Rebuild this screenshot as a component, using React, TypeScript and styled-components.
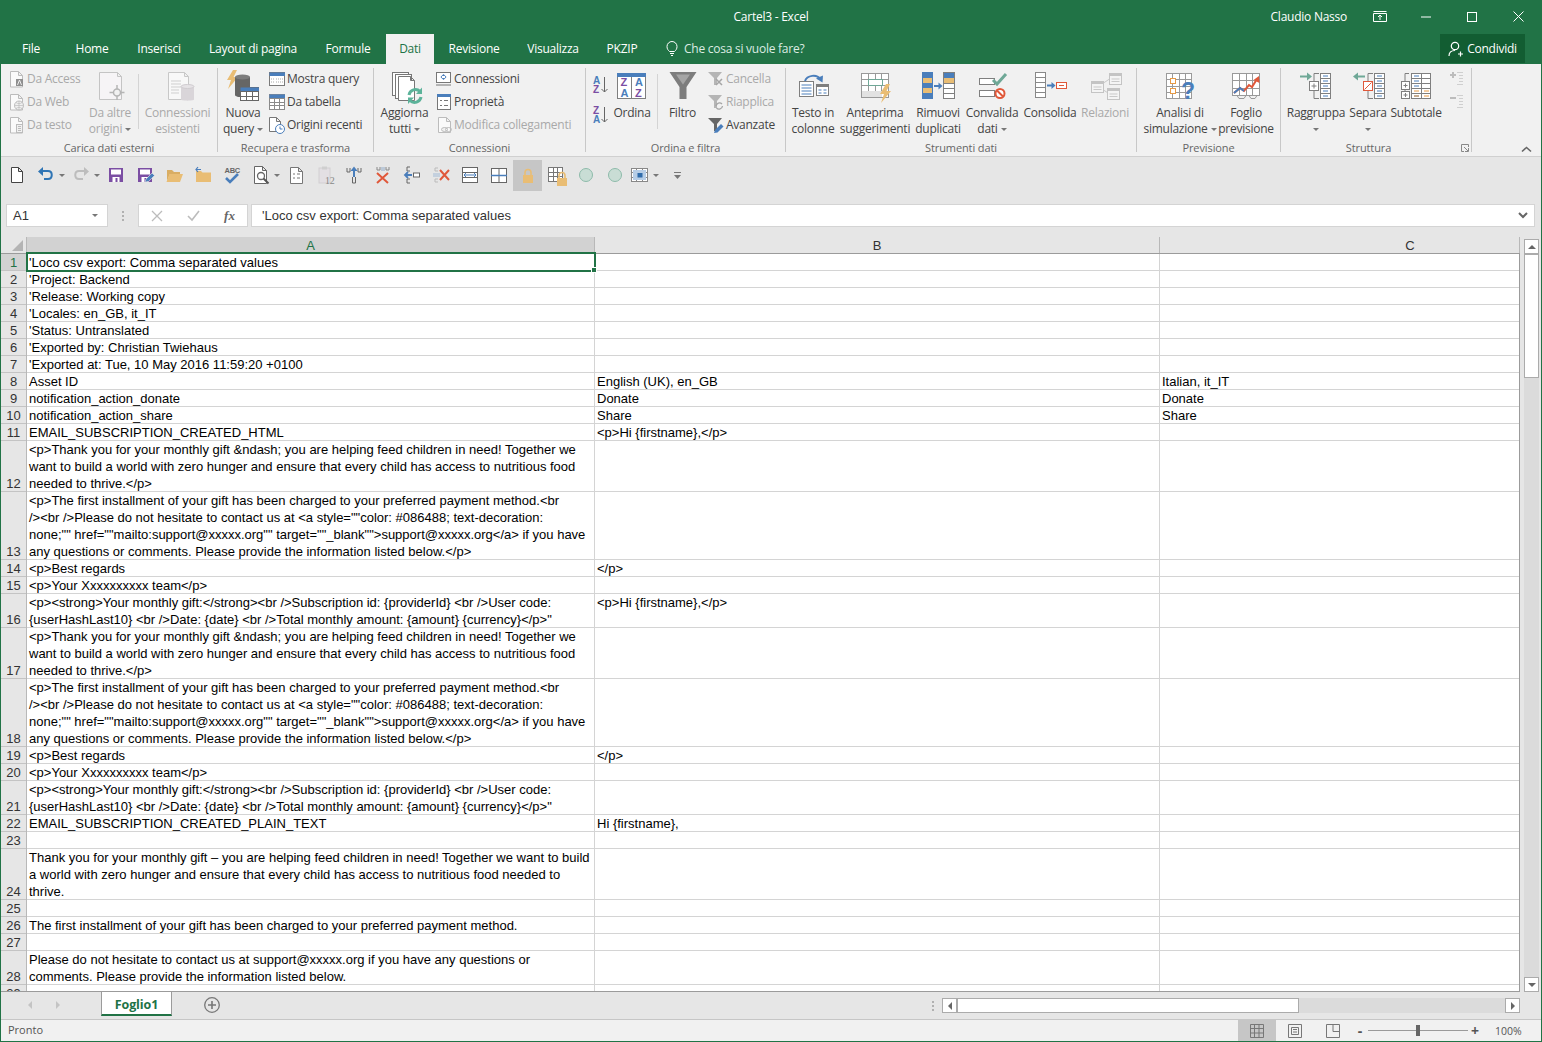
import React from "react";
import styled, { createGlobalStyle } from "styled-components";

const GlobalStyle = createGlobalStyle`
  html, body { margin: 0; padding: 0; background: #e6e6e6; }
  body { font-family: "Open Sans", "Liberation Sans", sans-serif; }
  #root { width: 1542px; height: 1042px; overflow: hidden; }
`;

const GREEN = "#217346";
const GR = "#7f7f7f";
const LT = "#bcbcbc";
const BL = "#4a7ebb";
const OR = "#e9bd74";
const RD = "#e0583a";
const TL = "#6fa897";
const PU = "#7b4ea3";

/* ---------- window ---------- */
const Win = styled.div`
  box-sizing: border-box;
  width: 1542px;
  height: 1042px;
  border: 1px solid ${GREEN};
  border-top: 0;
  display: flex;
  flex-direction: column;
  background: #e6e6e6;
  font-size: 12px;
  letter-spacing: -0.25px;
  color: #444;
`;
const TitleBar = styled.div`
  height: 34px;
  box-sizing: border-box;
  padding-bottom: 1px;
  background: ${GREEN};
  color: #fff;
  display: grid;
  grid-template-columns: 1fr auto 1fr;
  align-items: center;
`;
const TitleRight = styled.div`
  display: flex;
  justify-content: flex-end;
  align-items: center;
`;
const UserName = styled.span`
  margin-right: 10px;
`;
const WinBtn = styled.div`
  width: 46px;
  height: 32px;
  display: flex;
  align-items: center;
  justify-content: center;
`;
const TabBar = styled.div`
  height: 30px;
  background: ${GREEN};
  color: #fff;
  display: flex;
  padding-left: 7px;
`;
const Tab = styled.div<{ $w: number; $on?: boolean }>`
  width: ${(p) => p.$w}px;
  box-sizing: border-box;
  padding-bottom: 2px;
  margin-left: ${(p) => (p.$on ? 8 : 0)}px;
  display: flex;
  align-items: center;
  justify-content: center;
  background: ${(p) => (p.$on ? "#f1f1f1" : "transparent")};
  color: ${(p) => (p.$on ? GREEN : "#fff")};
`;
const TellMe = styled.div`
  margin-left: 14px;
  padding-bottom: 2px;
  display: flex;
  align-items: center;
  gap: 6px;
  color: #dcebe3;
`;
const Share = styled.div`
  margin-left: auto;
  margin-right: 16px;
  width: 85px;
  height: 29px;
  background: #125d32;
  display: flex;
  align-items: center;
  justify-content: center;
  gap: 3px;
`;

/* ---------- ribbon ---------- */
const Ribbon = styled.div`
  height: 92px;
  background: #f1f1f1;
  border-bottom: 1px solid #d0d0d0;
  display: flex;
`;
const Group = styled.div<{ $w: number }>`
  position: relative;
  width: ${(p) => p.$w}px;
  display: flex;
  flex-direction: column;
  background: linear-gradient(#c8c8c8, #c8c8c8) right 4px / 1px 84px no-repeat;
`;
const GroupBody = styled.div<{ $pl?: number }>`
  height: 76px;
  display: flex;
  padding-left: ${(p) => p.$pl ?? 0}px;
`;
const GroupLabel = styled.div<{ $pr?: number }>`
  height: 16px;
  line-height: 16px;
  text-align: center;
  color: #666;
  font-size: 11px;
  letter-spacing: -0.1px;
  padding-right: ${(p) => p.$pr ?? 1}px;
`;
const Launcher = styled.div`
  position: absolute;
  right: 3px;
  bottom: 4px;
`;
const Large = styled.div<{ $w: number; $off?: boolean }>`
  width: ${(p) => p.$w}px;
  flex-shrink: 0;
  padding-top: 7px;
  display: flex;
  flex-direction: column;
  align-items: center;
  color: ${(p) => (p.$off ? "#a9a9a9" : "#444")};
  white-space: nowrap;
`;
const LargeIcon = styled.div`
  height: 34px;
`;
const Line = styled.div`
  height: 16px;
  line-height: 16px;
  display: flex;
  align-items: center;
  gap: 3px;
`;
const Caret = styled.span`
  width: 0;
  height: 0;
  border-left: 3px solid transparent;
  border-right: 3px solid transparent;
  border-top: 3px solid #777;
`;
const SmallCol = styled.div<{ $w: number }>`
  width: ${(p) => p.$w}px;
  flex-shrink: 0;
  padding-top: 3px;
`;
const SmallRow = styled.div<{ $off?: boolean }>`
  height: 23px;
  display: flex;
  align-items: center;
  gap: 1px;
  white-space: nowrap;
  color: ${(p) => (p.$off ? "#a9a9a9" : "#444")};
`;
const SortCol = styled.div`
  width: 23px;
  padding: 12px 0 0 5px;
  box-sizing: border-box;
  display: flex;
  flex-direction: column;
  gap: 11px;
`;
const VSep = styled.div<{ $ml: number }>`
  width: 1px;
  height: 55px;
  margin: 10px 0 0 ${(p) => p.$ml}px;
  background: #d4d4d4;
  flex-shrink: 0;
`;
const Collapse = styled.div`
  flex: 1;
  display: flex;
  align-items: flex-end;
  justify-content: flex-end;
  padding: 0 9px 4px 0;
`;

/* ---------- quick access ---------- */
const Qat = styled.div`
  height: 40px;
  padding: 3px 0 0 1px;
  box-sizing: border-box;
  display: flex;
  align-items: flex-start;
`;
const QatBtn = styled.div<{ $w?: number; $on?: boolean; $pl?: number }>`
  width: ${(p) => p.$w ?? 29}px;
  height: 31px;
  padding-bottom: 1px;
  display: flex;
  align-items: center;
  gap: 3px;
  box-sizing: border-box;
  padding-left: ${(p) => p.$pl ?? 0}px;
  justify-content: ${(p) => (p.$pl !== undefined ? "flex-start" : "center")};
  background: ${(p) => (p.$on ? "#c6c6c6" : "transparent")};
`;

/* ---------- formula bar ---------- */
const FormulaRow = styled.div`
  margin-top: 7px;
  height: 23px;
  display: flex;
  align-items: stretch;
  padding-left: 5px;
  font-family: "Liberation Sans", Arial, sans-serif;
  font-size: 13px;
  letter-spacing: 0;
  color: #333;
`;
const FieldBox = styled.div<{ $w?: number }>`
  box-sizing: border-box;
  width: ${(p) => (p.$w ? `${p.$w}px` : "auto")};
  background: #fff;
  border: 1px solid #d4d4d4;
  display: flex;
  align-items: center;
`;
const NameBox = styled(FieldBox)`
  padding: 0 9px 0 6px;
  justify-content: space-between;
`;
const Dots = styled.div`
  width: 30px;
  display: flex;
  flex-direction: column;
  align-items: center;
  justify-content: center;
  gap: 2px;
  & i {
    width: 2px;
    height: 2px;
    background: #b0b0b0;
  }
`;
const FnBox = styled(FieldBox)`
  justify-content: space-around;
  margin-right: 3px;
  color: #666;
  font-family: "Liberation Serif", serif;
  font-style: italic;
  font-weight: bold;
  font-size: 13px;
`;
const Input = styled(FieldBox)`
  flex: 1;
  margin-right: 6px;
  padding: 0 6px 0 10px;
  justify-content: space-between;
`;

/* ---------- sheet ---------- */
const Sheet = styled.div`
  margin-top: 10px;
  height: 755px;
  display: flex;
`;
const GridWrap = styled.div`
  width: 1519px;
  height: 755px;
  box-sizing: border-box;
  overflow: hidden;
  border-bottom: 1px solid #9b9b9b;
  font-family: "Liberation Sans", Arial, sans-serif;
  font-size: 13px;
  letter-spacing: 0;
  color: #000;
`;
const cols = "26px 568px 565px 360px";
const HeadRow = styled.div`
  display: grid;
  grid-template-columns: ${cols};
  grid-template-rows: 16px;
  height: 17px;
  box-sizing: border-box;
  border-bottom: 1px solid #9b9b9b;
`;
const Corner = styled.div`
  border-right: 1px solid #b8b8b8;
  background: #e6e6e6;
  display: flex;
  align-items: flex-end;
  justify-content: flex-end;
  padding: 0 3px 2px 0;
`;
const ColHead = styled.div<{ $on?: boolean; $shift?: number }>`
  box-sizing: border-box;
  overflow: hidden;
  text-align: center;
  line-height: 18px;
  padding-left: ${(p) => p.$shift ?? 0}px;
  color: ${(p) => (p.$on ? GREEN : "#333")};
  background: ${(p) => (p.$on ? "#d2d2d2" : "#e6e6e6")};
  border-right: 1px solid #b8b8b8;
  border-bottom: ${(p) => (p.$on ? `1px solid ${GREEN}` : "0")};
`;
const Row = styled.div<{ $lines: number }>`
  display: grid;
  grid-template-columns: ${cols};
  grid-template-rows: ${(p) => p.$lines * 17}px;
`;
const RowHead = styled.div<{ $on?: boolean }>`
  box-sizing: border-box;
  display: flex;
  align-items: flex-end;
  justify-content: center;
  line-height: 17px;
  color: ${(p) => (p.$on ? GREEN : "#333")};
  background: ${(p) => (p.$on ? "#d2d2d2" : "#e6e6e6")};
  border-right: 1px solid ${(p) => (p.$on ? GREEN : "#b8b8b8")};
  box-shadow: inset 0 -1px 0 #c4c4c4;
`;
const Cell = styled.div<{ $edge?: boolean }>`
  position: relative;
  box-sizing: border-box;
  min-height: 0;
  background: #fff;
  padding: 0 2px;
  line-height: 17px;
  white-space: pre;
  display: flex;
  align-items: flex-end;
  border-right: 1px solid ${(p) => (p.$edge ? "#9b9b9b" : "#d4d4d4")};
  box-shadow: inset 0 -1px 0 #d4d4d4;
`;
const Selection = styled.div`
  position: absolute;
  z-index: 2;
  left: -1px;
  top: -2px;
  right: -2px;
  bottom: -1px;
  border: 2px solid ${GREEN};
  &::after {
    content: "";
    position: absolute;
    right: -3px;
    bottom: -3px;
    width: 4px;
    height: 4px;
    background: ${GREEN};
    border: 1px solid #fff;
  }
`;
const VScroll = styled.div`
  margin: 2px 0 0 4px;
  width: 15px;
  height: 753px;
  display: flex;
  flex-direction: column;
  background: #dbdbdb;
`;
const ScrollBtn = styled.div<{ $w?: number }>`
  box-sizing: border-box;
  width: ${(p) => p.$w ?? 15}px;
  height: 15px;
  flex-shrink: 0;
  background: #fff;
  border: 1px solid #ababab;
  display: flex;
  align-items: center;
  justify-content: center;
`;
const VThumb = styled.div`
  box-sizing: border-box;
  height: 124px;
  background: #fff;
  border: 1px solid #ababab;
`;
const Grow = styled.div`
  flex: 1;
`;

/* ---------- bottom ---------- */
const SheetBar = styled.div`
  height: 27px;
  display: flex;
  align-items: flex-start;
`;
const NavArrows = styled.div`
  width: 100px;
  height: 26px;
  padding-left: 24px;
  box-sizing: border-box;
  display: flex;
  align-items: center;
  gap: 18px;
`;
const SheetTab = styled.div`
  box-sizing: border-box;
  width: 71px;
  height: 24px;
  padding-top: 2px;
  background: #fff;
  color: ${GREEN};
  font-weight: 700;
  letter-spacing: -0.1px;
  font-size: 12.5px;
  display: flex;
  align-items: center;
  justify-content: center;
  border-left: 1px solid #9b9b9b;
  border-right: 1px solid #9b9b9b;
  border-bottom: 2px solid ${GREEN};
`;
const AddSheet = styled.div`
  margin: 5px 0 0 32px;
  height: 18px;
`;
const HScrollZone = styled.div`
  margin: 6px 0 0 auto;
  width: 596px;
  margin-right: 21px;
  display: flex;
  align-items: center;
`;
const HDots = styled(Dots)`
  width: 18px;
  margin-right: 0;
`;
const HTrack = styled.div`
  flex: 1;
  height: 15px;
  background: #dbdbdb;
  display: flex;
`;
const HThumb = styled.div`
  box-sizing: border-box;
  width: 342px;
  background: #fff;
  border: 1px solid #ababab;
`;
const Status = styled.div`
  height: 22px;
  box-sizing: border-box;
  background: #f1f1f1;
  border-top: 1px solid #c6c6c6;
  display: flex;
  align-items: center;
  padding: 0 0 0 7px;
  color: #555;
  font-size: 11px;
  letter-spacing: 0;
`;
const StatusText = styled.span`
  margin-top: -2px;
`;
const StatusRight = styled.div`
  margin-left: auto;
  display: flex;
  align-items: center;
  height: 21px;
`;
const ViewBtn = styled.div<{ $on?: boolean }>`
  width: 38px;
  height: 21px;
  display: flex;
  align-items: center;
  justify-content: center;
  background: ${(p) => (p.$on ? "#c6c6c6" : "transparent")};
`;
const ZoomSlider = styled.div`
  width: 100px;
  height: 1px;
  background: #9a9a9a;
  display: flex;
  justify-content: center;
  align-items: center;
  & i {
    width: 4px;
    height: 11px;
    background: #666;
  }
`;
const ZoomSign = styled.span<{ $w: number }>`
  width: ${(p) => p.$w}px;
  text-align: center;
  font-weight: 700;
  font-size: 14px;
  color: #555;
`;
const Percent = styled.span`
  width: 59px;
  padding-left: 13px;
  box-sizing: border-box;
  font-size: 10.5px;
`;

/* ---------- drawing helpers ---------- */
const Glyph = styled.svg`
  display: block;
  overflow: visible;
  flex-shrink: 0;
`;
type Kids = { children?: React.ReactNode };
const S = ({ children }: Kids) => (
  <Glyph width={18} height={18} viewBox="0 0 18 18" fill="none">
    {children}
  </Glyph>
);
const L = ({ children }: Kids) => (
  <Glyph width={36} height={32} viewBox="0 0 36 32" fill="none">
    {children}
  </Glyph>
);
const Q = ({ children }: Kids) => (
  <Glyph width={20} height={20} viewBox="0 0 20 20" fill="none">
    {children}
  </Glyph>
);
const Doc = ({ x, y, w, h, c = GR, f = "#fff" }: { x: number; y: number; w: number; h: number; c?: string; f?: string }) => (
  <path d={`M${x} ${y}h${w - 4}l4 4v${h - 4}h${-w}zM${x + w - 4} ${y}v4h4`} stroke={c} fill={f} />
);
const Tbl = ({ x, y, w, h, nx, ny, c = GR, head }: { x: number; y: number; w: number; h: number; nx: number; ny: number; c?: string; head?: string }) => {
  const parts: React.ReactNode[] = [];
  for (let i = 1; i < nx; i++) {
    const px = x + Math.round((w * i) / nx);
    parts.push(<path key={`x${i}`} d={`M${px} ${y}v${h}`} stroke={c} />);
  }
  for (let i = 1; i < ny; i++) {
    const py = y + Math.round((h * i) / ny);
    parts.push(<path key={`y${i}`} d={`M${x} ${py}h${w}`} stroke={c} />);
  }
  return (
    <>
      <rect x={x} y={y} width={w} height={h} fill="#fff" />
      {parts}
      <rect x={x} y={y} width={w} height={h} stroke={c} />
      {head && <rect x={x} y={y} width={w + 0.5} height={3.5} fill={head} />}
    </>
  );
};
const Bolt = ({ x, y, k = 1 }: { x: number; y: number; k?: number }) => (
  <path transform={`translate(${x} ${y}) scale(${k})`} d="M6 0L0 10h4L1 19 11 7H6.5L10 0z" fill={OR} />
);
const Funnel = ({ c }: { c: string }) => <path d="M1 2h14L10 8v7H7V8z" fill={c} />;
const Pencil = ({ x, y }: { x: number; y: number }) => (
  <path transform={`translate(${x} ${y})`} d="M0 9l1-3 6-6 2.5 2.5-6 6z" fill={BL} />
);

/* ---------- ribbon icons ---------- */
const IcAccess = () => (
  <S>
    <Doc x={2.5} y={1.5} w={12} h={15.5} c={LT} f="#fafafa" />
    <rect x={8} y={9} width={7} height={7} fill="#8f8f8f" />
    <path d="M9.5 15l2-5 2 5" stroke="#eee" />
  </S>
);
const IcWeb = () => (
  <S>
    <Doc x={2.5} y={1.5} w={12} h={15.5} c={LT} f="#fafafa" />
    <circle cx={11} cy={12.5} r={4.5} stroke={LT} fill="#f1f1f1" />
    <path d="M6.5 12.5h9M11 8v9M8 9.5c2 1.5 4 1.5 6 0M8 15.5c2-1.5 4-1.5 6 0" stroke={LT} strokeWidth={0.7} />
  </S>
);
const IcTxt = () => (
  <S>
    <Doc x={2.5} y={1.5} w={12} h={15.5} c={LT} f="#fafafa" />
    <rect x={8.5} y={8.5} width={6} height={8} fill="#f1f1f1" stroke={LT} />
    <path d="M10 10.5h3M10 12.5h3M10 14.5h3" stroke={LT} />
  </S>
);
const IcOther = () => (
  <L>
    <Doc x={7.5} y={1.5} w={22} h={27} c="#c4c4c4" f="#f6f4f6" />
    <circle cx={25} cy={21.5} r={3.5} stroke="#b5b5b5" strokeWidth={1.5} fill="#f1f1f1" />
    <path d="M25 14v4M25 25v4M17.5 21.5h4M28.5 21.5h4" stroke="#b5b5b5" strokeWidth={1.5} />
  </L>
);
const IcExisting = () => (
  <L>
    <Doc x={8.5} y={1.5} w={20} h={27} c="#c8c8c8" f="#f8f8f8" />
    <path d="M11 10h10M11 13h10M11 16h10M11 19h8M11 22h8" stroke="#cfcfcf" />
    <path d="M21 15.5h13v13c0 1.5-13 1.5-13 0z" fill="#d9d5d9" />
    <ellipse cx={27.5} cy={15.5} rx={6.5} ry={2} fill="#e6e3e6" stroke="#d0ccd0" />
  </L>
);
const IcNewQuery = () => (
  <L>
    <Bolt x={2} y={-1} />
    <path d="M10 6h15v18c0 3-15 3-15 0z" fill="#666" />
    <ellipse cx={17.5} cy={6} rx={7.5} ry={2.5} fill="#7d7d7d" />
    <Tbl x={15.5} y={16.5} w={18} h={13} nx={3} ny={3} c="#666" head={BL} />
  </L>
);
const IcShowQuery = () => (
  <S>
    <Tbl x={1.5} y={2.5} w={15} h={13} nx={1} ny={1} c="#7a7a7a" head={BL} />
    <path d="M3 9h3M3 12h3M8 9h7M8 12h7" stroke="#aaa" strokeDasharray="1 1" />
  </S>
);
const IcFromTable = () => (
  <S>
    <Tbl x={1.5} y={1.5} w={15} h={15} nx={3} ny={4} c="#8a8a8a" head={BL} />
  </S>
);
const IcRecent = () => (
  <S>
    <Doc x={1.5} y={1.5} w={11} h={14} c="#777" />
    <circle cx={12} cy={13} r={4.5} fill="#fff" stroke={BL} />
    <path d="M12 10.5V13h2.5" stroke={BL} />
  </S>
);
const IcRefreshAll = () => (
  <L>
    <rect x={5.5} y={1.5} width={16} height={23} fill="#fff" stroke="#777" />
    <rect x={8.5} y={3.5} width={16} height={24} fill="#fff" stroke="#777" />
    <Doc x={11.5} y={5.5} w={16} h={24} c="#777" />
    <path d="M22 24a6.5 6.5 0 0 1 11-3.5" stroke="#5cb39a" strokeWidth={3} />
    <path d="M35 16.5v6.5h-6z" fill="#5cb39a" />
    <path d="M34 26a6.5 6.5 0 0 1-11 3.5" stroke="#5cb39a" strokeWidth={3} />
    <path d="M21 33v-6.5h6z" fill="#5cb39a" />
  </L>
);
const IcConn = () => (
  <S>
    <rect x={1.5} y={2.5} width={14} height={10} stroke="#777" fill="#fff" />
    <path d="M1 15h15" stroke="#777" />
    <path d="M8.5 4l3 3-3 3-3-3z" fill={BL} />
    <rect x={7} y={6} width={3} height={2} fill="#fff" />
  </S>
);
const IcProps = () => (
  <S>
    <rect x={2.5} y={1.5} width={13} height={15} stroke="#777" fill="#fff" />
    <rect x={2} y={1} width={14} height={3} fill={BL} />
    <path d="M5 7.5h2M5 12.5h2M9 7.5h4M9 12.5h4" stroke="#777" />
  </S>
);
const IcEditLinks = () => (
  <S>
    <Doc x={3.5} y={1.5} w={12} h={15} c={LT} f="#fafafa" />
    <ellipse cx={9.5} cy={13.5} rx={3} ry={2} stroke={LT} fill="#f1f1f1" />
    <ellipse cx={13.5} cy={13.5} rx={3} ry={2} stroke={LT} />
  </S>
);
const Sort = ({ a, b }: { a: string; b: string }) => (
  <Glyph width={18} height={19} viewBox="0 0 18 19" fill="none">
    <text x={2} y={8} fontFamily="Liberation Sans" fontWeight={700} fontSize={10} fill={a === "A" ? BL : PU}>{a}</text>
    <text x={2} y={17} fontFamily="Liberation Sans" fontWeight={700} fontSize={10} fill={b === "A" ? BL : PU}>{b}</text>
    <path d="M13.5 1v15M10.5 13l3 3 3-3" stroke="#666" />
  </Glyph>
);
const IcSort = () => (
  <L>
    <rect x={3.5} y={2.5} width={28} height={25} fill="#fff" stroke={GR} />
    <rect x={3} y={2} width={29} height={4} fill={BL} />
    <path d="M17.5 6v21" stroke={GR} />
    <g fontFamily="Liberation Sans" fontWeight={700} fontSize={11}>
      <text x={6.5} y={15} fill={PU}>Z</text>
      <text x={6.5} y={26} fill={BL}>A</text>
      <text x={21} y={15} fill={BL}>A</text>
      <text x={21} y={26} fill={PU}>Z</text>
    </g>
  </L>
);
const IcFilter = () => (
  <L>
    <path d="M4.5 1h27L21.5 16v12h-7V16z" fill="#7d7d7d" />
    <path d="M11 3.5h14l-7 10z" fill="#a5a5a5" />
  </L>
);
const IcClear = () => (
  <S>
    <Funnel c="#b5b5b5" />
    <path d="M9 9l6 6M15 9l-6 6" stroke="#a5a5a5" strokeWidth={1.5} />
  </S>
);
const IcReapply = () => (
  <S>
    <Funnel c="#b5b5b5" />
    <path d="M9 13a3.5 3.5 0 0 1 6-2M15.5 13a3.5 3.5 0 0 1-6 2" stroke="#a5a5a5" strokeWidth={1.3} />
  </S>
);
const IcAdvanced = () => (
  <S>
    <Funnel c="#666" />
    <Pencil x={7} y={8} />
  </S>
);
const IcTextCols = () => (
  <L>
    <rect x={4.5} y={10.5} width={14} height={15} fill="#fff" stroke={GR} />
    <path d="M6.5 14h10M6.5 17h10M6.5 20h10M6.5 23h10" stroke={BL} />
    <rect x={21.5} y={13.5} width={12} height={11} fill="#fff" stroke={GR} />
    <rect x={21} y={13} width={13} height={3} fill={GR} />
    <path d="M23.5 19h3M28.5 19h3M23.5 22h3M28.5 22h3" stroke={BL} />
    <path d="M10 10C12 4 22 3 25 8" stroke={BL} strokeWidth={2} />
    <path d="M21 7.5l6.5 4 .5-7z" fill={BL} />
  </L>
);
const IcFlash = () => (
  <L>
    <Tbl x={4.5} y={2.5} w={27} h={24} nx={4} ny={4} c="#999" />
    <rect x={11.5} y={8.5} width={14} height={6} fill="#fff" stroke={TL} />
    <rect x={5} y={20} width={20} height={6} fill="#e2e2e2" />
    <Bolt x={23} y={13} k={1} />
  </L>
);
const IcDedupe = () => (
  <L>
    <rect x={2} y={1} width={11} height={27} fill={BL} />
    <rect x={3} y={7} width={9} height={5} fill={OR} />
    <rect x={3} y={17} width={9} height={5} fill={OR} />
    <path d="M14 15h6" stroke={BL} strokeWidth={2} />
    <path d="M18.5 11.5l4 3.5-4 3.5z" fill={BL} />
    <rect x={23.5} y={1.5} width={11} height={26} fill="#fff" stroke={GR} />
    <rect x={24} y={2} width={10} height={5} fill={BL} />
    <rect x={24} y={7} width={10} height={5} fill={OR} />
    <path d="M24 12.5h10M24 17.5h10M24 22.5h10" stroke={GR} />
  </L>
);
const IcValidate = () => (
  <L>
    <rect x={5.5} y={7.5} width={15} height={6} fill="#fff" stroke={GR} />
    <rect x={5.5} y={19.5} width={15} height={6} fill="#fff" stroke={GR} />
    <path d="M19 9l4 4L32 3" stroke={TL} strokeWidth={3} />
    <circle cx={26} cy={22.5} r={4.5} fill="#fff" stroke={RD} strokeWidth={2} />
    <path d="M23 19.5l6 6" stroke={RD} strokeWidth={2} />
  </L>
);
const IcConsolidate = () => (
  <L>
    <Tbl x={3.5} y={1.5} w={10} h={25} nx={1} ny={5} c="#888" />
    <path d="M15 14.5h6" stroke={BL} strokeWidth={2} />
    <path d="M19.5 11l4 3.5-4 3.5z" fill={BL} />
    <rect x={24.5} y={11.5} width={10} height={6} fill="#fff" stroke={RD} />
    <path d="M27 14.5h5" stroke={RD} />
  </L>
);
const RelBox = ({ x, y }: { x: number; y: number }) => (
  <>
    <rect x={x} y={y} width={12} height={11} fill="#f4f4f4" stroke="#c4c4c4" />
    <rect x={x} y={y} width={12} height={2.5} fill="#c4c4c4" />
    <path d={`M${x + 2} ${y + 5.5}h8M${x + 2} ${y + 8}h8`} stroke="#c9c9c9" />
  </>
);
const IcRelations = () => (
  <L>
    <path d="M15 13l9-6M15 18l9 6" stroke="#c9c9c9" />
    <RelBox x={4.5} y={10.5} />
    <RelBox x={22.5} y={2.5} />
    <RelBox x={20.5} y={17.5} />
  </L>
);
const IcWhatIf = () => (
  <L>
    <Tbl x={4.5} y={2.5} w={25} h={25} nx={4} ny={4} c="#9a9a9a" />
    <rect x={8.5} y={7.5} width={5} height={5} fill="#fff" stroke="#e79a45" />
    <rect x={8.5} y={17.5} width={5} height={5} fill="#fff" stroke="#e79a45" />
    <text x={19} y={28} fontFamily="Liberation Sans" fontWeight={700} fontSize={23} fill={BL}>?</text>
  </L>
);
const IcForecast = () => (
  <L>
    <Tbl x={4.5} y={2.5} w={27} h={22} nx={4} ny={3} c="#999" />
    <path d="M6 22l6-5 4 3 5-6 3 2 5-8" stroke={RD} strokeWidth={2} />
    <path d="M31 5l.5 7-6-3z" fill={RD} />
    <path d="M6 22l6-5 4 3" stroke={BL} strokeWidth={2} />
    <path d="M9 24.5l2 3h5l2-3M21 24.5l2 3h4l2-3" stroke="#999" />
  </L>
);
const Stack = ({ x }: { x: number }) => (
  <>
    <rect x={x + 0.5} y={2.5} width={10} height={25} fill="#fff" stroke={GR} />
    <path d={`M${x} 7.5h11M${x} 12.5h11M${x} 17.5h11M${x} 22.5h11`} stroke={GR} />
    <path d={`M${x + 3} 5h5M${x + 3} 10h5M${x + 3} 15h5M${x + 3} 20h5M${x + 3} 25h5`} stroke={BL} />
  </>
);
const IcGroup = () => (
  <L>
    <path d="M2 5.5h9" stroke={TL} strokeWidth={2} />
    <path d="M9 1.5l5 4-5 4z" fill={TL} />
    <path d="M21 2.5h-5v8M16 19v8.5h5" stroke={GR} />
    <rect x={11.5} y={10.5} width={9} height={9} fill="#fff" stroke={GR} />
    <path d="M13.5 15h5M16 12.5v5" stroke={GR} />
    <Stack x={22} />
  </L>
);
const IcUngroup = () => (
  <L>
    <path d="M6 5.5h9" stroke={TL} strokeWidth={2} />
    <path d="M8 1.5l-5 4 5 4z" fill={TL} />
    <path d="M23 2.5h-5v8M18 19v8.5h5" stroke={GR} />
    <rect x={13.5} y={10.5} width={9} height={9} fill="#fff" stroke={RD} />
    <path d="M14.5 18.5l7-7" stroke={RD} />
    <Stack x={24} />
  </L>
);
const IcSubtotal = () => (
  <L>
    <path d="M11 2.5H7v8M7 19v1" stroke={GR} />
    <rect x={3.5} y={10.5} width={8} height={8} fill="#fff" stroke={GR} />
    <path d="M5.5 14.5h4M7.5 12.5v4" stroke={GR} />
    <rect x={3.5} y={20.5} width={8} height={7} fill="#fff" stroke={GR} />
    <path d="M5.5 24h4M7.5 22v4" stroke={GR} />
    <Tbl x={13.5} y={2.5} w={19} h={25} nx={2} ny={5} c={GR} />
    <path d="M16 5h5M16 10h5M16 15h5M16 25h5" stroke={BL} />
    <path d="M16 20h5M26 20h5M26 25h5M16 25h5" stroke="#e79a45" />
  </L>
);
const IcShowDetail = ({ minus }: { minus?: boolean }) => (
  <S>
    <path d={minus ? "M3 5h6" : "M3 5h6M6 2v6"} stroke={LT} strokeWidth={2} />
    <path d="M10 2.5h6M12 5.5h4M12 8.5h4M12 11.5h4M10 14.5h6" stroke="#cfcfcf" />
  </S>
);

/* ---------- quick access icons ---------- */
const Undo = ({ c }: { c: string }) => (
  <Q>
    <path d="M5 6h7c5 0 5 8 0 8H8" stroke={c} strokeWidth={2} />
    <path d="M7 2L2 6.5 7 11z" fill={c} />
  </Q>
);
const Redo = ({ c }: { c: string }) => (
  <Q>
    <path d="M15 6H8c-5 0-5 8 0 8h4" stroke={c} strokeWidth={2} />
    <path d="M13 2l5 4.5-5 4.5z" fill={c} />
  </Q>
);
const Floppy = ({ pen }: { pen?: boolean }) => (
  <Q>
    <rect x={3} y={3} width={14} height={14} fill={PU} />
    <rect x={5} y={4.5} width={10} height={5} fill="#fff" />
    <rect x={6.5} y={12} width={7} height={5} fill="#fff" />
    <rect x={9.5} y={13} width={2} height={4} fill={PU} />
    {pen && <path d="M10 17l1-3 6-6 2.5 2.5-6 6z" fill={BL} stroke="#e6e6e6" strokeWidth={0.6} />}
  </Q>
);
const Open = () => (
  <Q>
    <path d="M3 16V5h5l2 2h6v2H6z" fill="#d9ad63" />
    <path d="M2.5 17l3-8H19l-3 8z" fill={OR} />
  </Q>
);
const Folder = () => (
  <Q>
    <path d="M3 6h5l1.5 1.5H18V17H3z" fill={OR} />
    <path d="M3 4.5h5M5 2l-2 2.5L5 7" stroke={BL} strokeWidth={1.2} />
  </Q>
);
const Spell = () => (
  <Q>
    <text x={2.5} y={8} fontFamily="Liberation Sans" fontSize={7.5} fontWeight={700} fill="#666">ABC</text>
    <path d="M4 13l4 4 8-8" stroke={BL} strokeWidth={2.6} />
  </Q>
);
const Preview = () => (
  <Q>
    <Doc x={3.5} y={1.5} w={12} h={17} c="#666" />
    <circle cx={10} cy={11} r={3.5} stroke="#666" fill="#fff" strokeWidth={1.3} />
    <path d="M12.5 13.5l5 5" stroke="#555" strokeWidth={2} />
  </Q>
);
const Form = () => (
  <Q>
    <Doc x={4.5} y={2.5} w={12} h={16} c="#777" />
    <path d="M7 9h2M7 13h2M11 9h3M11 13h3" stroke="#777" />
  </Q>
);
const Paste12 = () => (
  <Q>
    <rect x={4} y={3} width={11} height={15} fill="#e3dfe3" stroke="#d2cfd2" />
    <rect x={7} y={1.5} width={5} height={3} fill="#cfcfcf" />
    <text x={10} y={19} fontFamily="Liberation Serif" fontSize={10} fill="#888">12</text>
  </Q>
);
const Columns = () => (
  <Q>
    <path d="M3 3v4h3V3M14 3v4h3V3M8.5 12v6h3v-6" stroke="#666" />
    <path d="M10 12V5" stroke={BL} strokeWidth={2} />
    <path d="M6.5 6L10 1.5 13.5 6z" fill={BL} />
  </Q>
);
const DelCols = () => (
  <Q>
    <path d="M4 2v3h3V2M13 2v3h3V2" stroke="#888" />
    <rect x={8} y={2} width={4} height={4} fill="#bcc9d8" />
    <path d="M4 8l11 10M15 8L4 18" stroke={RD} strokeWidth={2} />
  </Q>
);
const ShiftL = () => (
  <Q>
    <path d="M8 2H5v4h3M8 14H5v4h3" stroke="#666" />
    <path d="M3 10h7M6 7l-3 3 3 3" stroke={BL} strokeWidth={1.8} />
    <rect x={11.5} y={8} width={6} height={4} stroke="#666" fill="#fff" />
  </Q>
);
const ShiftX = () => (
  <Q>
    <path d="M7 3H4v3h3M7 14H4v3h3" stroke="#bbb" />
    <rect x={2} y={8} width={7} height={4} fill="#c4d0de" />
    <path d="M9 5l9 10M18 5l-9 10" stroke={RD} strokeWidth={2} />
  </Q>
);
const RowH = () => (
  <Q>
    <Tbl x={2.5} y={2.5} w={15} h={15} nx={1} ny={3} c="#666" />
    <path d="M4 10h12M6 8l-2 2 2 2M14 8l2 2-2 2" stroke={BL} />
  </Q>
);
const RowLine = () => (
  <Q>
    <rect x={2.5} y={3.5} width={15} height={14} fill="#fff" stroke="#666" />
    <path d="M10 4v13" stroke="#666" />
    <path d="M2 10.5h16" stroke={BL} strokeWidth={1.5} />
  </Q>
);
const Padlock = ({ x, y }: { x: number; y: number }) => (
  <g transform={`translate(${x} ${y})`}>
    <path d="M3 7V4.5a3 3 0 0 1 6 0V7" stroke={OR} strokeWidth={1.6} />
    <rect x={1} y={7} width={10} height={8} fill={OR} />
  </g>
);
const Lock = () => (
  <Q>
    <Padlock x={4} y={3} />
  </Q>
);
const GridLock = () => (
  <Q>
    <Tbl x={1.5} y={2.5} w={14} h={14} nx={3} ny={3} c="#777" />
    <Padlock x={9} y={6} />
  </Q>
);
const Dot = () => (
  <Q>
    <circle cx={10} cy={10} r={6.5} fill="#c9ddd5" stroke="#8dbbaa" />
  </Q>
);
const Borders = () => (
  <Q>
    <Tbl x={1.5} y={3.5} w={16} h={13} nx={3} ny={3} c="#888" />
    <rect x={3} y={5} width={13} height={10} fill="#b6cde6" />
    <rect x={7.5} y={8} width={5} height={4.5} fill="#2f6cab" />
  </Q>
);

const Big = ({ w, off, label, caret, icon }: { w: number; off?: boolean; label: string; caret?: boolean; icon: React.ReactNode }) => {
  const lines = label.split("\n");
  if (lines.length === 1) lines.push("");
  return (
    <Large $w={w} $off={off}>
      <LargeIcon>{icon}</LargeIcon>
      {lines.map((t, i) => (
        <Line key={i}>
          {t}
          {caret && i === lines.length - 1 && <Caret />}
        </Line>
      ))}
    </Large>
  );
};

const Small = ({ icon, label, off }: { icon: React.ReactNode; label?: string; off?: boolean }) => (
  <SmallRow $off={off}>
    {icon}
    {label}
  </SmallRow>
);

const thanks = "<p>Thank you for your monthly gift &ndash; you are helping feed children in need! Together we\nwant to build a world with zero hunger and ensure that every child has access to nutritious food\nneeded to thrive.</p>";
const install = "<p>The first installment of your gift has been charged to your preferred payment method.<br\n/><br />Please do not hesitate to contact us at <a style=\"\"color: #086488; text-decoration:\nnone;\"\" href=\"\"mailto:support@xxxxx.org\"\" target=\"\"_blank\"\">support@xxxxx.org</a> if you have\nany questions or comments. Please provide the information listed below.</p>";
const strong = "<p><strong>Your monthly gift:</strong><br />Subscription id: {providerId} <br />User code:\n{userHashLast10} <br />Date: {date} <br />Total monthly amount: {amount} {currency}</p>\"";

const rows: [number, string, string?, string?][] = [
  [1, "'Loco csv export: Comma separated values"],
  [1, "'Project: Backend"],
  [1, "'Release: Working copy"],
  [1, "'Locales: en_GB, it_IT"],
  [1, "'Status: Untranslated"],
  [1, "'Exported by: Christian Twiehaus"],
  [1, "'Exported at: Tue, 10 May 2016 11:59:20 +0100"],
  [1, "Asset ID", "English (UK), en_GB", "Italian, it_IT"],
  [1, "notification_action_donate", "Donate", "Donate"],
  [1, "notification_action_share", "Share", "Share"],
  [1, "EMAIL_SUBSCRIPTION_CREATED_HTML", "<p>Hi {firstname},</p>"],
  [3, thanks],
  [4, install],
  [1, "<p>Best regards", "</p>"],
  [1, "<p>Your Xxxxxxxxxx team</p>"],
  [2, strong, "<p>Hi {firstname},</p>\n "],
  [3, thanks],
  [4, install],
  [1, "<p>Best regards", "</p>"],
  [1, "<p>Your Xxxxxxxxxx team</p>"],
  [2, strong],
  [1, "EMAIL_SUBSCRIPTION_CREATED_PLAIN_TEXT", "Hi {firstname},"],
  [1, ""],
  [3, "Thank you for your monthly gift – you are helping feed children in need! Together we want to build\na world with zero hunger and ensure that every child has access to nutritious food needed to\nthrive."],
  [1, ""],
  [1, "The first installment of your gift has been charged to your preferred payment method."],
  [1, ""],
  [2, "Please do not hesitate to contact us at support@xxxxx.org if you have any questions or\ncomments. Please provide the information listed below."],
  [1, ""],
];

const Tri = ({ d, c = "#666" }: { d: "u" | "d" | "l" | "r"; c?: string }) => {
  const p = { u: "M1 7l4-4 4 4z", d: "M1 3l4 4 4-4z", l: "M7 1L3 5l4 4z", r: "M3 1l4 4-4 4z" }[d];
  return (
    <Glyph width={10} height={10} viewBox="0 0 10 10">
      <path d={p} fill={c} />
    </Glyph>
  );
};

export default function App() {
  return (
    <>
      <GlobalStyle />
      <Win>
        <TitleBar>
          <span />
          <span>Cartel3 - Excel</span>
          <TitleRight>
            <UserName>Claudio Nasso</UserName>
            <WinBtn>
              <Glyph width={14} height={11} viewBox="0 0 14 11" fill="none" stroke="#fff">
                <path d="M.5 2.5h13v8H.5zM.5.5h13M7 9V4M5 6l2-2 2 2" />
              </Glyph>
            </WinBtn>
            <WinBtn>
              <Glyph width={10} height={2} viewBox="0 0 10 2" stroke="#fff">
                <path d="M0 1h10" />
              </Glyph>
            </WinBtn>
            <WinBtn>
              <Glyph width={10} height={10} viewBox="0 0 10 10" fill="none" stroke="#fff">
                <rect x={0.5} y={0.5} width={9} height={9} />
              </Glyph>
            </WinBtn>
            <WinBtn>
              <Glyph width={11} height={11} viewBox="0 0 11 11" stroke="#fff">
                <path d="M.5.5l10 10M10.5.5l-10 10" />
              </Glyph>
            </WinBtn>
          </TitleRight>
        </TitleBar>
        <TabBar>
          <Tab $w={46}>File</Tab>
          <Tab $w={76}>Home</Tab>
          <Tab $w={58}>Inserisci</Tab>
          <Tab $w={130}>Layout di pagina</Tab>
          <Tab $w={60}>Formule</Tab>
          <Tab $w={48} $on>Dati</Tab>
          <Tab $w={80}>Revisione</Tab>
          <Tab $w={78}>Visualizza</Tab>
          <Tab $w={60}>PKZIP</Tab>
          <TellMe>
            <Glyph width={12} height={15} viewBox="0 0 12 15" fill="none" stroke="#fff">
              <path d="M3.5 10.5C2 9 1 8 1 5.5a5 5 0 0 1 10 0c0 2.5-1 3.5-2.5 5zM4 12.5h4M5 14.5h2" />
            </Glyph>
            Che cosa si vuole fare?
          </TellMe>
          <Share>
            <Glyph width={16} height={16} viewBox="0 0 16 16" fill="none" stroke="#fff" strokeWidth={1.2}>
              <circle cx={7} cy={5} r={3.7} />
              <path d="M1 15c0-3.5 2.5-5.5 6-5.5M10 13h5M12.5 10.5v5" />
            </Glyph>
            Condividi
          </Share>
        </TabBar>

        <Ribbon>
          <Group $w={217}>
            <GroupBody $pl={7}>
              <SmallCol $w={77}>
                <Small off icon={<IcAccess />} label="Da Access" />
                <Small off icon={<IcWeb />} label="Da Web" />
                <Small off icon={<IcTxt />} label="Da testo" />
              </SmallCol>
              <Big w={50} off icon={<IcOther />} label={"Da altre\norigini"} caret />
              <VSep $ml={3} />
              <Big w={77} off icon={<IcExisting />} label={"Connessioni\nesistenti"} />
            </GroupBody>
            <GroupLabel>Carica dati esterni</GroupLabel>
          </Group>
          <Group $w={156}>
            <GroupBody>
              <Big w={50} icon={<IcNewQuery />} label={"Nuova\nquery"} caret />
              <SmallCol $w={100}>
                <Small icon={<IcShowQuery />} label="Mostra query" />
                <Small icon={<IcFromTable />} label="Da tabella" />
                <Small icon={<IcRecent />} label="Origini recenti" />
              </SmallCol>
            </GroupBody>
            <GroupLabel>Recupera e trasforma</GroupLabel>
          </Group>
          <Group $w={212}>
            <GroupBody>
              <Big w={61} icon={<IcRefreshAll />} label={"Aggiorna\ntutti"} caret />
              <SmallCol $w={150}>
                <Small icon={<IcConn />} label="Connessioni" />
                <Small icon={<IcProps />} label="Proprietà" />
                <Small off icon={<IcEditLinks />} label="Modifica collegamenti" />
              </SmallCol>
            </GroupBody>
            <GroupLabel>Connessioni</GroupLabel>
          </Group>
          <Group $w={200}>
            <GroupBody>
              <SortCol>
                <Sort a="A" b="Z" />
                <Sort a="Z" b="A" />
              </SortCol>
              <Big w={46} icon={<IcSort />} label="Ordina" />
              <VSep $ml={2} />
              <Big w={49} icon={<IcFilter />} label="Filtro" />
              <SmallCol $w={78}>
                <Small off icon={<IcClear />} label="Cancella" />
                <Small off icon={<IcReapply />} label="Riapplica" />
                <Small icon={<IcAdvanced />} label="Avanzate" />
              </SmallCol>
            </GroupBody>
            <GroupLabel>Ordina e filtra</GroupLabel>
          </Group>
          <Group $w={351}>
            <GroupBody>
              <Big w={54} icon={<IcTextCols />} label={"Testo in\ncolonne"} />
              <Big w={70} icon={<IcFlash />} label={"Anteprima\nsuggerimenti"} />
              <Big w={56} icon={<IcDedupe />} label={"Rimuovi\nduplicati"} />
              <Big w={52} icon={<IcValidate />} label={"Convalida\ndati"} caret />
              <Big w={64} icon={<IcConsolidate />} label="Consolida" />
              <Big w={46} off icon={<IcRelations />} label="Relazioni" />
            </GroupBody>
            <GroupLabel>Strumenti dati</GroupLabel>
          </Group>
          <Group $w={144}>
            <GroupBody>
              <Big w={86} icon={<IcWhatIf />} label={"Analisi di\nsimulazione"} caret />
              <Big w={46} icon={<IcForecast />} label={"Foglio\nprevisione"} />
            </GroupBody>
            <GroupLabel>Previsione</GroupLabel>
          </Group>
          <Group $w={191}>
            <GroupBody>
              <Big w={70} icon={<IcGroup />} label="Raggruppa" caret />
              <Big w={34} icon={<IcUngroup />} label="Separa" caret />
              <Big w={62} icon={<IcSubtotal />} label="Subtotale" />
              <SmallCol $w={18}>
                <Small icon={<IcShowDetail />} />
                <Small icon={<IcShowDetail minus />} />
              </SmallCol>
            </GroupBody>
            <GroupLabel $pr={16}>Struttura</GroupLabel>
            <Launcher>
              <Glyph width={8} height={8} viewBox="0 0 8 8" fill="none" stroke="#888">
                <path d="M7.5 3V.5H.5v7H3M3 3l4 4M7.5 4v3.5H4" />
              </Glyph>
            </Launcher>
          </Group>
          <Collapse>
            <Glyph width={11} height={6} viewBox="0 0 11 6" fill="none" stroke="#666" strokeWidth={1.6}>
              <path d="M1 5.5l4.5-4 4.5 4" />
            </Glyph>
          </Collapse>
        </Ribbon>

        <Qat>
          <QatBtn>
            <Q>
              <Doc x={4.5} y={2.5} w={11} h={15} c="#444" />
            </Q>
          </QatBtn>
          <QatBtn $w={35} $pl={4.5}><Undo c="#2f75b5" /><Caret /></QatBtn>
          <QatBtn $w={35} $pl={4.5}><Redo c="#bdbdbd" /><Caret /></QatBtn>
          <QatBtn><Floppy /></QatBtn>
          <QatBtn><Floppy pen /></QatBtn>
          <QatBtn><Open /></QatBtn>
          <QatBtn><Folder /></QatBtn>
          <QatBtn><Spell /></QatBtn>
          <QatBtn $w={35} $pl={4.5}><Preview /><Caret /></QatBtn>
          <QatBtn><Form /></QatBtn>
          <QatBtn><Paste12 /></QatBtn>
          <QatBtn><Columns /></QatBtn>
          <QatBtn><DelCols /></QatBtn>
          <QatBtn><ShiftL /></QatBtn>
          <QatBtn><ShiftX /></QatBtn>
          <QatBtn><RowH /></QatBtn>
          <QatBtn><RowLine /></QatBtn>
          <QatBtn $on><Lock /></QatBtn>
          <QatBtn><GridLock /></QatBtn>
          <QatBtn><Dot /></QatBtn>
          <QatBtn><Dot /></QatBtn>
          <QatBtn $w={36} $pl={1}><Borders /><Caret /></QatBtn>
          <QatBtn $w={25}>
            <Glyph width={7} height={7} viewBox="0 0 7 7" fill="#777">
              <path d="M0 0h7v1H0zM0 3h7L3.5 7z" />
            </Glyph>
          </QatBtn>
        </Qat>

        <FormulaRow>
          <NameBox $w={102}>
            A1
            <Caret />
          </NameBox>
          <Dots><i /><i /><i /></Dots>
          <FnBox $w={110}>
            <Glyph width={12} height={12} viewBox="0 0 12 12" stroke="#bcbcbc" strokeWidth={1.3}>
              <path d="M1 1l10 10M11 1L1 11" />
            </Glyph>
            <Glyph width={13} height={12} viewBox="0 0 13 12" fill="none" stroke="#bcbcbc" strokeWidth={1.6}>
              <path d="M1 6l4 4 7-9" />
            </Glyph>
            <span>fx</span>
          </FnBox>
          <Input>
            'Loco csv export: Comma separated values
            <Glyph width={10} height={7} viewBox="0 0 10 7" fill="none" stroke="#666" strokeWidth={2}>
              <path d="M1 1l4 4 4-4" />
            </Glyph>
          </Input>
        </FormulaRow>

        <Sheet>
          <GridWrap>
            <HeadRow>
              <Corner>
                <Glyph width={11} height={11} viewBox="0 0 11 11">
                  <path d="M11 0v11H0z" fill="#b4b4b4" />
                </Glyph>
              </Corner>
              <ColHead $on>A</ColHead>
              <ColHead>B</ColHead>
              <ColHead $shift={141}>C</ColHead>
            </HeadRow>
            {rows.map(([lines, a, b, c], i) => (
              <Row key={i} $lines={lines}>
                <RowHead $on={i === 0}>{i + 1}</RowHead>
                <Cell>
                  {a}
                  {i === 0 && <Selection />}
                </Cell>
                <Cell>{b}</Cell>
                <Cell $edge>{c}</Cell>
              </Row>
            ))}
          </GridWrap>
          <VScroll>
            <ScrollBtn><Tri d="u" /></ScrollBtn>
            <VThumb />
            <Grow />
            <ScrollBtn><Tri d="d" /></ScrollBtn>
          </VScroll>
        </Sheet>

        <SheetBar>
          <NavArrows>
            <Tri d="l" c="#c4c4c4" />
            <Tri d="r" c="#c4c4c4" />
          </NavArrows>
          <SheetTab>Foglio1</SheetTab>
          <AddSheet>
            <Glyph width={16} height={16} viewBox="0 0 16 16" fill="none" stroke="#777">
              <circle cx={8} cy={8} r={7.3} strokeWidth={1.3} />
              <path d="M8 4v8M4 8h8" strokeWidth={1.6} />
            </Glyph>
          </AddSheet>
          <HScrollZone>
            <HDots><i /><i /><i /></HDots>
            <ScrollBtn><Tri d="l" /></ScrollBtn>
            <HTrack><HThumb /></HTrack>
            <ScrollBtn><Tri d="r" /></ScrollBtn>
          </HScrollZone>
        </SheetBar>

        <Status>
          <StatusText>Pronto</StatusText>
          <StatusRight>
            <ViewBtn $on>
              <Glyph width={14} height={14} viewBox="0 0 14 14" fill="none" stroke="#777">
                <path d="M.5.5h13v13H.5zM.5 4.5h13M.5 9h13M4.5.5v13M9 .5v13" />
              </Glyph>
            </ViewBtn>
            <ViewBtn>
              <Glyph width={14} height={14} viewBox="0 0 14 14" fill="none" stroke="#777">
                <path d="M.5.5h13v13H.5zM3.5 3.5h7v7h-7zM5 5.5h4M5 8h4" />
              </Glyph>
            </ViewBtn>
            <ViewBtn>
              <Glyph width={14} height={14} viewBox="0 0 14 14" fill="none" stroke="#777">
                <path d="M.5.5h13v13H.5zM7 .5v7M7 7.5h6.5" />
              </Glyph>
            </ViewBtn>
            <ZoomSign $w={16}>-</ZoomSign>
            <ZoomSlider><i /></ZoomSlider>
            <ZoomSign $w={14}>+</ZoomSign>
            <Percent>100%</Percent>
          </StatusRight>
        </Status>
      </Win>
    </>
  );
}
